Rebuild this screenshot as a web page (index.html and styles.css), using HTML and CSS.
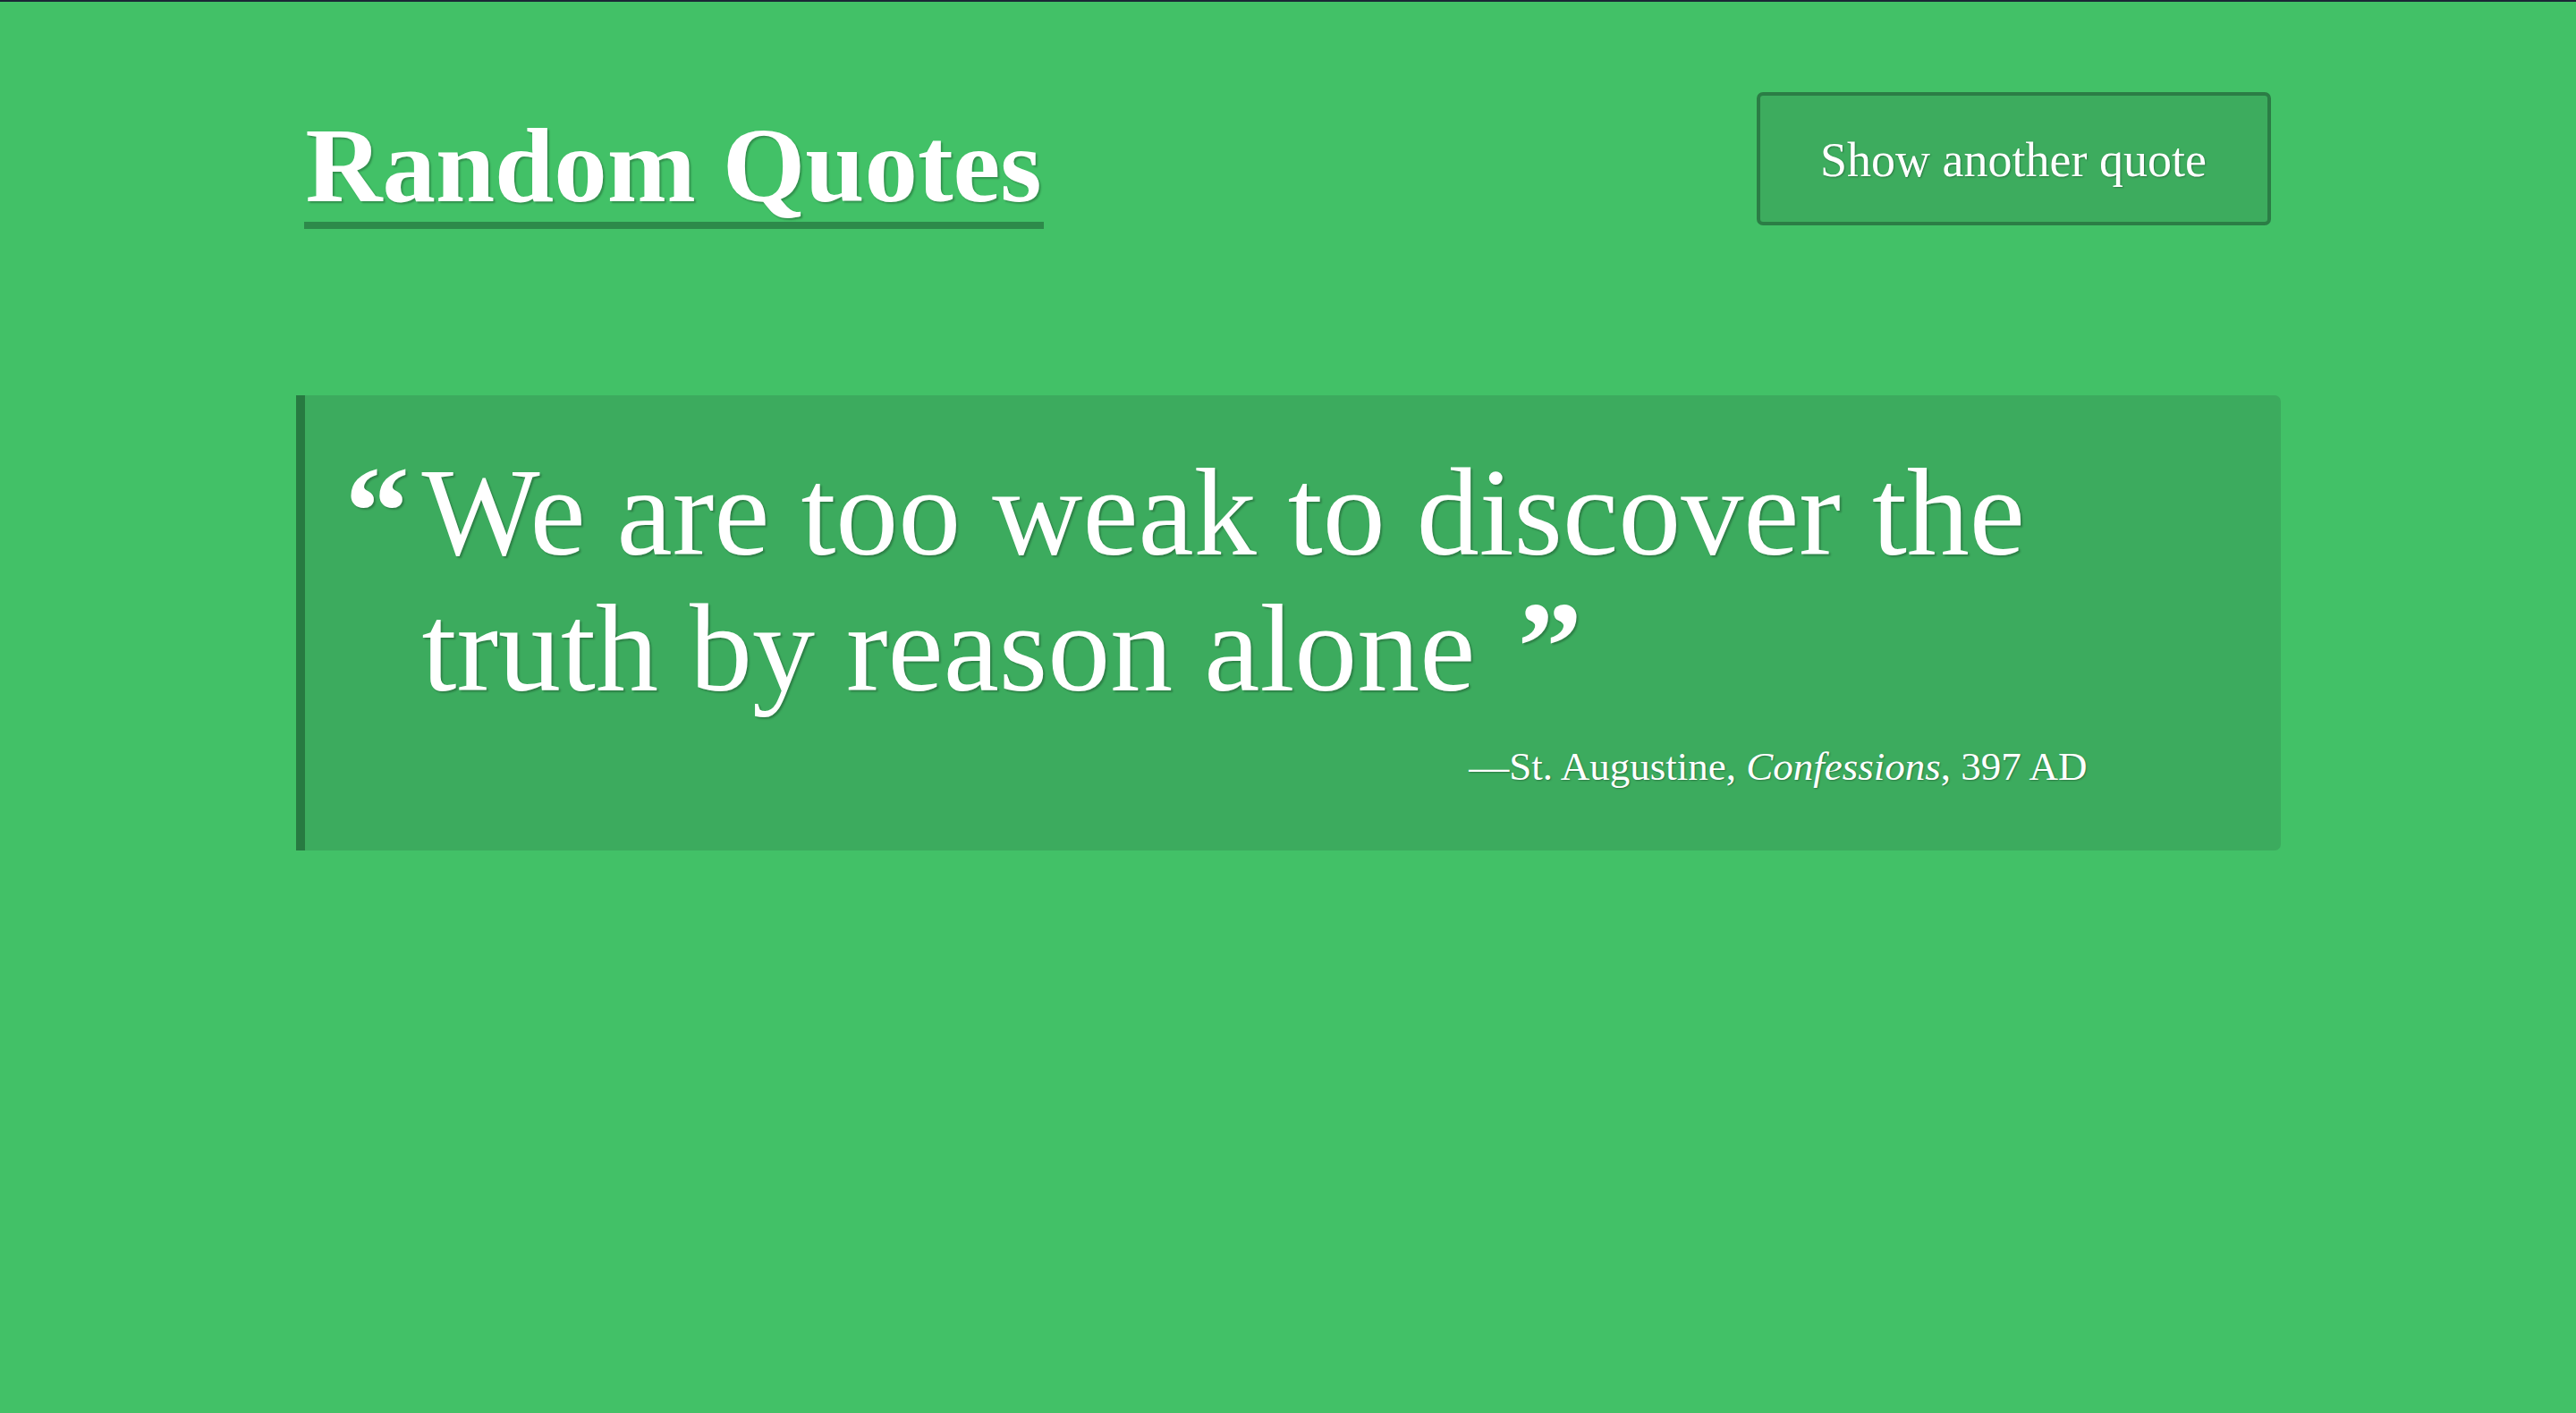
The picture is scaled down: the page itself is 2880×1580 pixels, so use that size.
FILE: index.html
```html
<!DOCTYPE html>
<html lang="en">
<head>
<meta charset="utf-8">
<title>Random Quotes</title>
<link rel="stylesheet" href="styles.css">
</head>
<body>
<div class="page">
  <header class="header">
    <h1 class="title">Random Quotes</h1>
    <button class="btn" type="button">Show another quote</button>
  </header>
  <blockquote class="quote">
    <p class="quote-text"><span class="mark open">“</span>We are too weak to discover the truth by reason alone <span class="mark close">”</span></p>
    <p class="cite">—St. Augustine, <em>Confessions</em>, 397 AD</p>
  </blockquote>
</div>
</body>
</html>
```
FILE: styles.css
```css
html, body {
  margin: 0;
  padding: 0;
}
body {
  background: #42c167;
  border-top: 2px solid #1b2736;
  min-height: 1578px;
  font-family: "Liberation Serif", "Times New Roman", serif;
  color: #ffffff;
}
.page {
  width: 2219px;
  margin: 0 auto;
  padding-top: 101px;
}
.header {
  display: flex;
  justify-content: space-between;
  align-items: flex-start;
  padding: 0 11px 0 9px;
}
.title {
  margin: 20px 0 0 0;
  font-size: 119px;
  line-height: 125px;
  font-weight: 700;
  border-bottom: 8px solid #2d8a4a;
  text-shadow: 2px 2px 2px rgba(0, 0, 0, 0.25);
  padding: 0 2px;
}
.btn {
  font-family: "Liberation Serif", "Times New Roman", serif;
  font-size: 54px;
  line-height: 65px;
  color: #ffffff;
  background: #3dac5e;
  border: 4px solid #2b7d45;
  border-radius: 7px;
  padding: 40px 0 36px;
  width: 575px;
  text-align: center;
  text-shadow: 1px 1px 2px rgba(0, 0, 0, 0.3);
}
.quote {
  margin: 186px 0 0 0;
  background: #3cab5e;
  border-left: 10px solid #277a41;
  border-radius: 0 7px 7px 0;
  padding: 55px 216px 67px 45px;
}
.quote-text {
  margin: 0;
  font-size: 140px;
  line-height: 152px;
  padding-left: 86px;
  text-indent: -86px;
  text-shadow: 2px 2px 2px rgba(0, 0, 0, 0.25);
}
.mark {
  display: inline-block;
  font-weight: 700;
  font-size: 145px;
  line-height: 60px;
  text-indent: 0;
}
.open {
  width: 86px;
}
.close {
  margin-left: 12px;
}
.cite {
  margin: 29px 0 0 0;
  font-size: 45px;
  line-height: 54px;
  text-align: right;
  text-shadow: 1px 1px 2px rgba(0, 0, 0, 0.3);
}
.cite em {
  font-style: italic;
}
```
